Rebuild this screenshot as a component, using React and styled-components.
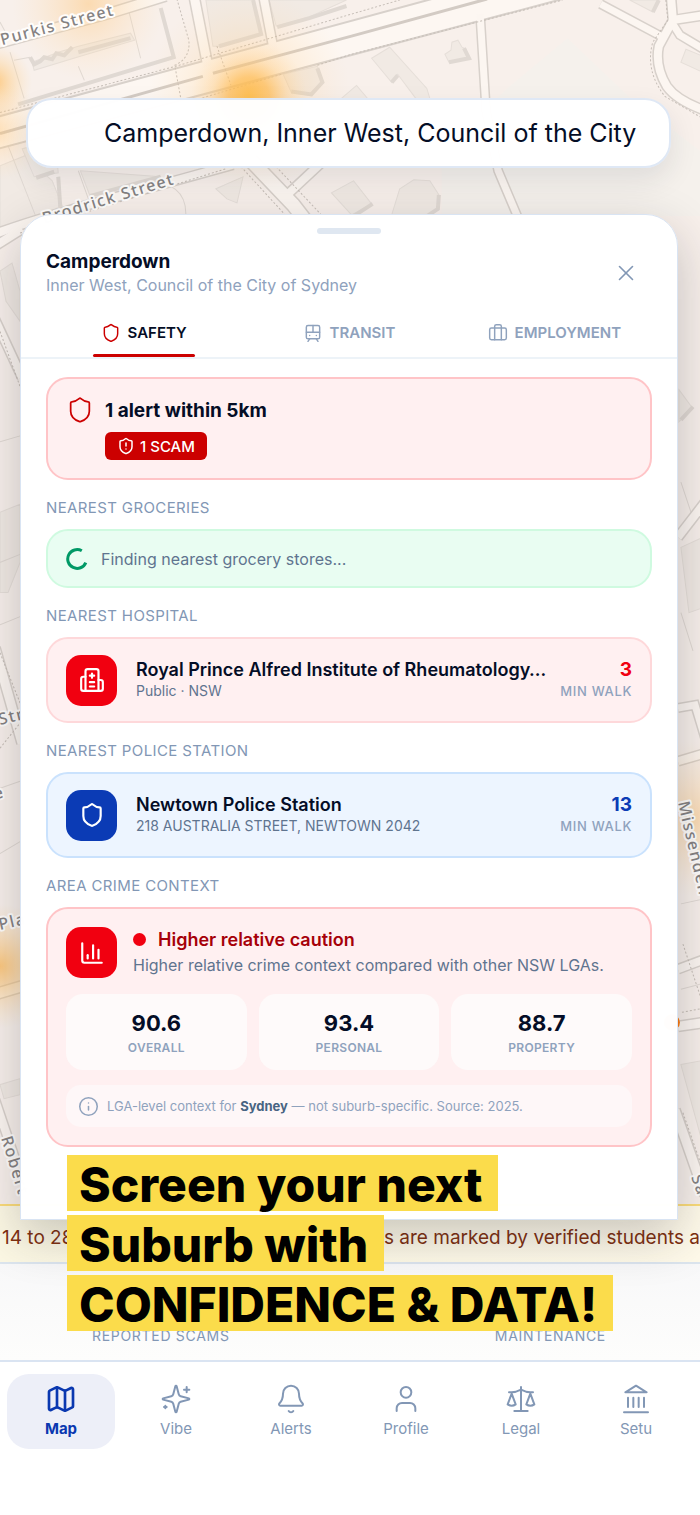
import React, { useState } from 'react';
import styled, { createGlobalStyle, css } from 'styled-components';
import { Bell, Briefcase, ChartColumn, Info, Map, Shield, ShieldAlert, TramFront, User, X } from 'lucide-react';

const GlobalStyle = createGlobalStyle`
  *, *::before, *::after {
    box-sizing: border-box;
  }

  body {
    margin: 0;
    background: #ffffff;
    font-family: Inter, 'Liberation Sans', sans-serif;
    color: #040d26;
  }

  button, input {
    font: inherit;
    color: inherit;
  }

  h1, h2, h3, p, dl, dd {
    margin: 0;
  }
`;

const Page = styled.div`
  position: relative;
  display: flex;
  flex-direction: column;
  min-height: 100vh;
  overflow: hidden;
`;

const MapCanvas = styled.svg`
  position: absolute;
  top: 0;
  left: 0;
  width: 100%;
  height: 1240px;
  background: #f6efea;
`;

const SearchBar = styled.label`
  position: relative;
  display: flex;
  align-items: center;
  height: 70px;
  margin: 98px 29px 46px 26px;
  padding: 0 24px 0 76px;
  background: rgba(255, 255, 255, 0.98);
  border: 2px solid #dfe8f5;
  border-radius: 26px;
  box-shadow: 0 12px 28px rgba(30, 40, 60, 0.1);
`;

const SearchInput = styled.input`
  width: 100%;
  padding: 0;
  border: 0;
  outline: 0;
  background: transparent;
  font-size: 25px;
`;

const Sheet = styled.main`
  position: relative;
  z-index: 1;
  margin: 0 22px 0 20px;
  padding-bottom: 72px;
  background: rgba(255, 255, 255, 0.99);
  border: 1px solid #d9e4f3;
  border-radius: 32px 32px 0 0;
  box-shadow: 0 16px 50px rgba(30, 30, 40, 0.24);
`;

const Handle = styled.div`
  width: 64px;
  height: 6px;
  margin: 13px auto 0;
  border-radius: 3px;
  background: #dfe7f1;
`;

const SheetHeader = styled.header`
  display: flex;
  justify-content: space-between;
  align-items: center;
  padding: 16px 38px 0 25px;
`;

const SuburbName = styled.h1`
  font-size: 19px;
  line-height: 24px;
  font-weight: 700;
`;

const SuburbArea = styled.p`
  font-size: 16px;
  line-height: 22px;
  color: #8fa2bd;
`;

const CloseButton = styled.button`
  display: flex;
  padding: 0;
  border: 0;
  background: none;
  color: #8297b5;
  cursor: pointer;
`;

const Tabs = styled.div`
  display: grid;
  grid-template-columns: repeat(3, 1fr);
  justify-items: center;
  padding: 15px 20px 0;
  border-bottom: 2px solid #edf3f8;
`;

const Tab = styled.button`
  position: relative;
  display: flex;
  align-items: center;
  gap: 7px;
  height: 46px;
  padding: 0 8px 3px;
  border: 0;
  background: none;
  color: ${({ $active }) => ($active ? '#040d26' : '#8fa2bd')};
  font-size: 15px;
  font-weight: 600;
  cursor: pointer;

  svg {
    color: ${({ $active }) => ($active ? '#cc0000' : '#8fa2bd')};
  }

  &::after {
    content: '';
    position: absolute;
    right: 0;
    bottom: 0;
    left: 0;
    height: 3px;
    border-radius: 2px;
    background: ${({ $active }) => ($active ? '#cc0000' : 'transparent')};
  }
`;

const Content = styled.div`
  padding: 18px 25px 0;
`;

const tones = {
  alert: { background: '#fff0f1', border: '#ffc4c7', strong: '#f10010' },
  red: { background: '#fff0f1', border: '#fed8da', strong: '#f10010' },
  green: { background: '#e9fdf2', border: '#cffae0', strong: '#009966' },
  blue: { background: '#edf5ff', border: '#cae2fd', strong: '#0b3bb5' },
};

const Card = styled.div`
  border: 2px solid ${({ $tone }) => tones[$tone].border};
  border-radius: 22px;
  background: ${({ $tone }) => tones[$tone].background};
`;

const AlertCard = styled(Card)`
  display: flex;
  gap: 11px;
  padding: 17px 18px 18px;

  > svg {
    color: #cc0000;
  }
`;

const AlertTitle = styled.h2`
  padding: 3px 0 9px;
  font-size: 19px;
  line-height: 24px;
  font-weight: 700;
`;

const ScamBadge = styled.span`
  display: inline-flex;
  align-items: center;
  gap: 5px;
  height: 28px;
  padding: 0 12px;
  border-radius: 6px;
  background: #cc0000;
  color: #ffffff;
  font-size: 15px;
  font-weight: 500;
`;

const SectionLabel = styled.h2`
  padding: 18px 0 11px;
  font-size: 15px;
  line-height: 20px;
  font-weight: 400;
  letter-spacing: 0.025em;
  text-transform: uppercase;
  color: #8297b5;
`;

const LoadingCard = styled(Card)`
  display: flex;
  align-items: center;
  gap: 13px;
  height: 59px;
  padding: 0 18px;
  font-size: 16px;
  color: #5f748f;
`;

const PlaceCard = styled(Card)`
  display: flex;
  align-items: center;
  min-height: 86px;
  padding: 15px 18px;
`;

const IconTile = styled.div`
  display: flex;
  flex: none;
  align-items: center;
  justify-content: center;
  width: 51px;
  height: 51px;
  border-radius: 15px;
  background: ${({ $tone }) => tones[$tone].strong};
  color: #ffffff;
`;

const PlaceText = styled.div`
  flex: 1;
  min-width: 0;
  padding: 0 11px 0 19px;
`;

const PlaceName = styled.h3`
  overflow: hidden;
  font-size: 18px;
  line-height: 22px;
  font-weight: 600;
  white-space: nowrap;
  text-overflow: ellipsis;
`;

const PlaceDetail = styled.p`
  font-size: 14px;
  line-height: 20px;
  color: #5f748f;
`;

const Distance = styled.div`
  text-align: right;
`;

const Minutes = styled.div`
  font-size: 19px;
  line-height: 22px;
  font-weight: 700;
  color: ${({ $tone }) => tones[$tone].strong};
`;

const MinutesUnit = styled.div`
  font-size: 13px;
  line-height: 20px;
  font-weight: 500;
  letter-spacing: 0.05em;
  color: #8fa2bd;
`;

const CrimeCard = styled(Card)`
  padding: 18px;
`;

const CrimeHead = styled.div`
  display: flex;
  align-items: center;
  gap: 16px;
`;

const CrimeTitle = styled.h3`
  display: flex;
  align-items: center;
  gap: 12px;
  font-size: 18px;
  line-height: 25px;
  font-weight: 600;
  color: #a60009;

  &::before {
    content: '';
    width: 13px;
    height: 13px;
    border-radius: 50%;
    background: #f10010;
  }
`;

const CrimeText = styled.p`
  font-size: 16px;
  line-height: 26px;
  color: #5f748f;
`;

const Scores = styled.dl`
  display: grid;
  grid-template-columns: repeat(3, 1fr);
  gap: 12px;
  padding: 16px 0 15px;
`;

const Score = styled.div`
  display: flex;
  flex-direction: column-reverse;
  align-items: center;
  justify-content: center;
  height: 76px;
  padding-top: 3px;
  border-radius: 17px;
  background: #fefafa;

  dd {
    font-size: 22px;
    line-height: 28px;
    font-weight: 700;
  }

  dt {
    font-size: 12px;
    line-height: 22px;
    font-weight: 600;
    letter-spacing: 0.025em;
    color: #8fa2bd;
  }
`;

const SourceNote = styled.p`
  display: flex;
  align-items: center;
  gap: 8px;
  min-height: 42px;
  padding: 0 12px;
  border-radius: 15px;
  background: #fef7f8;
  font-size: 13px;
  line-height: 18px;
  color: #8fa2bd;

  strong {
    color: #486482;
  }

  svg {
    flex: none;
  }
`;

const Footer = styled.footer`
  position: relative;
  display: flex;
  flex: 1;
  flex-direction: column;
  margin-top: -16px;
`;

const Ticker = styled.div`
  display: flex;
  align-items: center;
  justify-content: space-between;
  height: 60px;
  padding: 6px 0 0 2px;
  overflow: hidden;
  border-top: 2px solid #fbdc7a;
  border-bottom: 2px solid #dce5ee;
  background: linear-gradient(90deg, #fcf8e4, #fffaea);
  font-size: 19px;
  color: #7f3010;
  white-space: nowrap;
`;

const Totals = styled.div`
  display: flex;
  align-items: flex-end;
  justify-content: space-between;
  height: 96px;
  padding: 0 94px 14px 92px;
  background: linear-gradient(#f8f8f9, #fdfdfc);
  color: #8297b5;
  font-size: 14px;
  line-height: 20px;
  letter-spacing: 0.05em;
`;

const Headline = styled.div`
  position: absolute;
  z-index: 2;
  top: -49px;
  left: 67px;
  display: flex;
  flex-direction: column;
  align-items: flex-start;
  gap: 4px;
`;

const HeadlineLine = styled.span`
  height: 56px;
  padding: 0 16px 0 12px;
  background: #fbdc4b;
  color: #000000;
  font-size: 48px;
  line-height: 60px;
  font-weight: 800;
  white-space: nowrap;
`;

const BottomNav = styled.nav`
  display: grid;
  flex: 1;
  grid-template-columns: repeat(6, 1fr);
  align-items: start;
  gap: 7px;
  min-height: 155px;
  padding: 12px 10px 0 7px;
  border-top: 2px solid #dae4f2;
  background: #ffffff;
`;

const NavItem = styled.a`
  display: flex;
  flex-direction: column;
  align-items: center;
  gap: 4px;
  height: 75px;
  padding-top: 9px;
  border-radius: 22px;
  color: #8297b5;
  font-size: 15px;
  line-height: 20px;
  text-decoration: none;

  ${({ $active }) =>
    $active &&
    css`
      background: #edeff8;
      color: #0a38b0;
      font-weight: 700;
    `}
`;

const Outline = ({ size, strokeWidth, children }) => (
  <svg
    width={size}
    height={size}
    viewBox="0 0 24 24"
    fill="none"
    stroke="currentColor"
    strokeWidth={strokeWidth}
    strokeLinecap="round"
    strokeLinejoin="round"
    aria-hidden="true"
  >
    {children}
  </svg>
);

const HospitalIcon = (props) => (
  <Outline {...props}>
    <path d="M12 6v4M14 8h-4M14 14h-4M14 18h-4" />
    <path d="M18 12h2a2 2 0 0 1 2 2v6a2 2 0 0 1-2 2H4a2 2 0 0 1-2-2v-9a2 2 0 0 1 2-2h2" />
    <path d="M18 22V4a2 2 0 0 0-2-2H8a2 2 0 0 0-2 2v18" />
  </Outline>
);

const SparklesIcon = (props) => (
  <Outline {...props}>
    <path d="M9.937 15.5A2 2 0 0 0 8.5 14.063l-6.135-1.582a.5.5 0 0 1 0-.962L8.5 9.936A2 2 0 0 0 9.937 8.5l1.582-6.135a.5.5 0 0 1 .963 0L14.063 8.5A2 2 0 0 0 15.5 9.937l6.135 1.581a.5.5 0 0 1 0 .964L15.5 14.063a2 2 0 0 0-1.437 1.437l-1.582 6.135a.5.5 0 0 1-.963 0z" />
    <path d="M20 3v4M22 5h-4M4 17v2M5 18H3" />
  </Outline>
);

const ScaleIcon = (props) => (
  <Outline {...props}>
    <path d="m16 16 3-8 3 8c-.87.65-1.92 1-3 1s-2.13-.35-3-1ZM2 16l3-8 3 8c-.87.65-1.92 1-3 1s-2.13-.35-3-1Z" />
    <path d="M7 21h10M12 3v18M3 7h2c2 0 5-1 7-2 2 1 5 2 7 2h2" />
  </Outline>
);

const LandmarkIcon = (props) => (
  <Outline {...props}>
    <path d="M3 22h18M6 18v-7M10 18v-7M14 18v-7M18 18v-7M12 2l8 5H4z" />
  </Outline>
);

const SpinnerIcon = () => (
  <svg width="22" height="22" viewBox="0 0 22 22" fill="none" stroke="#009966" strokeWidth="3" aria-hidden="true">
    <path d="M15.8 2.8A9.4 9.4 0 1 0 19.8 14.6" />
  </svg>
);

const roads = [
  { d: 'M-5 233 C40 216 110 198 232 164', width: 8 },
  { d: 'M-5 44 L110 13 L165 -4', width: 9 },
  { d: 'M193 -5 L207 66', width: 9 },
  { d: 'M262 -5 L273 52', width: 8 },
  { d: 'M478 14 L484 110 L496 170 L518 222', width: 7 },
  { d: 'M598 4 L658 36', width: 7 },
  { d: 'M668 -5 L670 20 L656 46 Q652 66 664 86 Q674 100 702 110', width: 8 },
  { d: 'M670 20 L702 15', width: 8 },
  { d: 'M670 24 L677 35 L702 50', width: 7 },
  { d: 'M250 160 L292 204 L306 222', width: 13 },
  { d: 'M288 192 L320 162', width: 8 },
  { d: 'M-5 318 L22 376', width: 8 },
  { d: 'M-5 245 L22 228', width: 8 },
  { d: 'M-5 645 L22 740', width: 9 },
  { d: 'M675 535 L702 500', width: 8 },
  { d: 'M675 705 L692 702 L702 735', width: 7 },
  { d: 'M675 758 L702 750', width: 8 },
  { d: 'M675 1022 L702 1018', width: 9 },
  { d: 'M672 1105 L702 1190', width: 9 },
  { d: 'M-5 1095 L22 1175', width: 8 },
  { d: 'M-5 990 L22 982', width: 10 },
  { d: 'M675 965 L702 955', width: 8 },
];

const buildings = [
  'M32 62 L58 52 L78 46 L130 33 L134 40 L80 56 L34 70z',
  'M212 46 L205 0 L252 0 L260 35 L218 46z',
  'M275 26 L268 0 L345 0 L308 17z',
  'M370 58 L388 47 L425 88 L428 98 L414 98 L396 74 L390 82z',
  'M443 54 L449 50 L450 42 L456 40 L460 47 L464 49 L466 58 L447 62z',
  'M282 74 L316 66 L322 82 L310 95 L290 92z',
  'M340 98 L355 85 L366 98z',
  'M352 180 L370 203 L350 214 L330 192z',
  'M398 188 L412 179 L428 180 L437 194 L436 208 L422 216 L390 214z',
  'M80 170 L160 176 L90 196z',
  'M627 0 L650 12 L655 0z',
  'M683 49 L700 56 L700 72 L678 62z',
  'M0 165 L25 155 L52 180 L62 205 L20 222 L0 226z',
  'M22 148 L55 140 L58 172 L34 176z',
  'M215 188 L242 176 L236 202 L226 198z',
  'M0 270 L12 262 L20 290 L20 320 L6 300z',
  'M0 510 L20 502 L20 560 L8 590 L0 590z',
  'M678 545 L700 535 L700 605 L686 610z',
  'M678 1060 L700 1056 L700 1140z',
  'M0 1080 L20 1074 L20 1090 L4 1094z',
  'M676 388 L690 407 L676 420z',
];

const heatSpots = [
  { x: 248, y: 97, r: 58, fill: 'url(#heatStrong)' },
  { x: 248, y: 90, r: 100, fill: 'url(#heatSoft)' },
  { x: -6, y: 82, r: 38, fill: 'url(#heat)' },
  { x: 88, y: 4, r: 76, fill: 'url(#heatSoft)' },
  { x: -4, y: 130, r: 50, fill: 'url(#heatSoft)' },
  { x: 0, y: 962, r: 62, fill: 'url(#heat)' },
  { x: 690, y: 815, r: 78, fill: 'url(#heatSoft)' },
];

const mapLabels = [
  { text: 'Purkis Street', x: 2, y: 45, angle: -15 },
  { text: 'Brodrick Street', x: 44, y: 223, angle: -17 },
  { text: 'Str', x: 0, y: 722, angle: -14 },
  { text: 'e', x: -5, y: 796, angle: -14 },
  { text: 'Pla', x: 0, y: 926, angle: -13 },
  { text: 'Robert', x: 1, y: 1133, angle: 73 },
  { text: 'Missenden', x: 675, y: 799, angle: 77 },
  { text: 'Sa', x: 688, y: 1172, angle: 70 },
];

const StreetMap = () => (
  <MapCanvas viewBox="0 0 697 1240" preserveAspectRatio="xMinYMin slice" aria-hidden="true">
    <defs>
      <radialGradient id="heatStrong">
        <stop offset="0" stopColor="#ffba2e" stopOpacity="0.9" />
        <stop offset="0.35" stopColor="#ffb63c" stopOpacity="0.65" />
        <stop offset="0.65" stopColor="#ffc873" stopOpacity="0.25" />
        <stop offset="1" stopColor="#ffdca8" stopOpacity="0" />
      </radialGradient>
      <radialGradient id="heat">
        <stop offset="0" stopColor="#ffb74f" stopOpacity="0.7" />
        <stop offset="1" stopColor="#ffd9a0" stopOpacity="0" />
      </radialGradient>
      <radialGradient id="heatSoft">
        <stop offset="0" stopColor="#ffc06a" stopOpacity="0.45" />
        <stop offset="1" stopColor="#ffdcae" stopOpacity="0" />
      </radialGradient>
    </defs>
    <rect width="697" height="1240" fill="#f8f0eb" />
    <path d="M505 88 L565 38 L625 95 L697 150 V215 H440 V150z" fill="#f5f1ec" />
    <g fill="#f1eae4" stroke="#e6dfd9">
      {buildings.map((d) => (
        <path key={d} d={d} />
      ))}
    </g>
    <g fill="none" stroke="#e0d9d3" strokeWidth="4">
      <path d="M160 8 L173 57 L18 104 M78 52 L130 38 M218 46 L260 34 L252 0 M276 27 L308 18 L345 6 M316 68 L321 82 L310 94 L290 91 M390 82 L396 75 M447 62 L467 58 L462 48 M371 203 L351 216 M437 194 L436 208 L424 216 M58 176 L60 206 M36 177 L54 171 M90 195 L160 176 M30 57 L34 64 L40 61 L44 57 L52 59 L56 53 L64 55 L72 47 M650 12 L656 0 M690 405 L678 418" />
    </g>
    <g fill="none" stroke="#e0d9d3">
      <path d="M10 52 L24 98 M78 66 L84 80 M128 10 L140 58 M14 60 L30 57 M0 22 L12 44 M8 145 L35 214 M78 170 L88 198 M142 180 Q186 180 185 214 M0 440 L20 434 M0 622 L20 614 M0 560 L20 552 M0 785 L20 778 M0 850 L20 838 M678 480 L688 510 M678 610 L690 648 M678 900 L697 896 M678 985 L697 980" />
    </g>
    {roads.map(({ d, width }) => (
      <path key={d} d={d} fill="none" stroke="#d8d1cb" strokeWidth={width + 3} />
    ))}
    <path d="M-5 117 L430 -1 H560 L-5 149z" fill="#fdf7f2" stroke="#d8d1cb" strokeWidth="2" />
    {roads.map(({ d, width }) => (
      <path key={d} d={d} fill="none" stroke="#fcf6f1" strokeWidth={width} />
    ))}
    <path d="M0 133 L202 76 M212 73 L350 36 L485 -1" fill="none" stroke="#d3cbc4" strokeWidth="3" />
    <g fill="none" stroke="#c6beb7" strokeDasharray="2 2">
      <path d="M0 112 L175 66 L350 14 L398 0 M175 -5 L188 40 Q190 58 174 65 L180 98 M216 46 L230 85 M280 74 L200 98 M316 65 L350 54 L560 0 M663 0 L665 20 L650 42 Q642 70 662 96 L700 118 M240 166 L284 214 M275 166 L320 214 M20 232 L225 168 M0 330 L20 385 M0 650 L20 700 M0 745 L20 720 M680 800 L700 880 M680 940 L700 1000 M679 1008 L700 1004 M680 1108 L700 1165" />
    </g>
    {heatSpots.map(({ x, y, r, fill }) => (
      <circle key={`${x}-${y}`} cx={x} cy={y} r={r} fill={fill} />
    ))}
    <circle cx="669" cy="1018" r="8" fill="#ff7a0d" />
    <g
      fontFamily="'Noto Sans', sans-serif"
      fontSize="16"
      fontWeight="500"
      letterSpacing="1.5"
      fill="#858282"
      stroke="#fffdfb"
      strokeWidth="4"
      strokeLinejoin="round"
      paintOrder="stroke"
    >
      {mapLabels.map(({ text, x, y, angle }) => (
        <text key={text} transform={`translate(${x} ${y}) rotate(${angle})`}>
          {text}
        </text>
      ))}
    </g>
  </MapCanvas>
);

const tabs = [
  { id: 'safety', label: 'SAFETY', Icon: Shield },
  { id: 'transit', label: 'TRANSIT', Icon: TramFront },
  { id: 'employment', label: 'EMPLOYMENT', Icon: Briefcase },
];

const scores = [
  { label: 'OVERALL', value: '90.6' },
  { label: 'PERSONAL', value: '93.4' },
  { label: 'PROPERTY', value: '88.7' },
];

const navItems = [
  { label: 'Map', Icon: Map },
  { label: 'Vibe', Icon: SparklesIcon },
  { label: 'Alerts', Icon: Bell },
  { label: 'Profile', Icon: User },
  { label: 'Legal', Icon: ScaleIcon },
  { label: 'Setu', Icon: LandmarkIcon },
];

const Place = ({ tone, icon, name, detail, minutes }) => (
  <PlaceCard $tone={tone}>
    <IconTile $tone={tone}>{icon}</IconTile>
    <PlaceText>
      <PlaceName>{name}</PlaceName>
      <PlaceDetail>{detail}</PlaceDetail>
    </PlaceText>
    <Distance>
      <Minutes $tone={tone}>{minutes}</Minutes>
      <MinutesUnit>MIN WALK</MinutesUnit>
    </Distance>
  </PlaceCard>
);

const App = () => {
  const [query, setQuery] = useState('Camperdown, Inner West, Council of the City');
  const [activeTab, setActiveTab] = useState('safety');

  return (
    <Page>
      <GlobalStyle />
      <StreetMap />
      <SearchBar>
        <SearchInput aria-label="Search suburb" value={query} onChange={(e) => setQuery(e.target.value)} />
      </SearchBar>

      <Sheet>
        <Handle />
        <SheetHeader>
          <div>
            <SuburbName>Camperdown</SuburbName>
            <SuburbArea>Inner West, Council of the City of Sydney</SuburbArea>
          </div>
          <CloseButton type="button" aria-label="Close">
            <X size={26} strokeWidth={1.5} />
          </CloseButton>
        </SheetHeader>

        <Tabs role="tablist">
          {tabs.map(({ id, label, Icon }) => (
            <Tab
              key={id}
              type="button"
              role="tab"
              aria-selected={activeTab === id}
              $active={activeTab === id}
              onClick={() => setActiveTab(id)}
            >
              <Icon size={20} strokeWidth={1.75} />
              {label}
            </Tab>
          ))}
        </Tabs>

        <Content>
          <AlertCard $tone="alert">
            <Shield size={28} strokeWidth={1.5} />
            <div>
              <AlertTitle>1 alert within 5km</AlertTitle>
              <ScamBadge>
                <ShieldAlert size={18} strokeWidth={2} />1 SCAM
              </ScamBadge>
            </div>
          </AlertCard>

          <SectionLabel>Nearest groceries</SectionLabel>
          <LoadingCard $tone="green">
            <SpinnerIcon />
            Finding nearest grocery stores...
          </LoadingCard>

          <SectionLabel>Nearest hospital</SectionLabel>
          <Place
            tone="red"
            icon={<HospitalIcon size={26} strokeWidth={2} />}
            name="Royal Prince Alfred Institute of Rheumatology…"
            detail="Public · NSW"
            minutes={3}
          />

          <SectionLabel>Nearest police station</SectionLabel>
          <Place
            tone="blue"
            icon={<Shield size={26} strokeWidth={2} />}
            name="Newtown Police Station"
            detail="218 AUSTRALIA STREET, NEWTOWN 2042"
            minutes={13}
          />

          <SectionLabel>Area crime context</SectionLabel>
          <CrimeCard $tone="alert">
            <CrimeHead>
              <IconTile $tone="alert">
                <ChartColumn size={26} strokeWidth={2} />
              </IconTile>
              <div>
                <CrimeTitle>Higher relative caution</CrimeTitle>
                <CrimeText>Higher relative crime context compared with other NSW LGAs.</CrimeText>
              </div>
            </CrimeHead>
            <Scores>
              {scores.map(({ label, value }) => (
                <Score key={label}>
                  <dt>{label}</dt>
                  <dd>{value}</dd>
                </Score>
              ))}
            </Scores>
            <SourceNote>
              <Info size={21} strokeWidth={1.75} />
              <span>
                LGA-level context for <strong>Sydney</strong> — not suburb-specific. Source: 2025.
              </span>
            </SourceNote>
          </CrimeCard>
        </Content>
      </Sheet>

      <Footer>
        <Ticker>
          <span>14 to 28</span>
          <span>s are marked by verified students a</span>
        </Ticker>
        <Totals>
          <span>REPORTED SCAMS</span>
          <span>MAINTENANCE</span>
        </Totals>
        <BottomNav>
          {navItems.map(({ label, Icon }, index) => (
            <NavItem key={label} href={`#${label.toLowerCase()}`} $active={index === 0}>
              <Icon size={32} strokeWidth={index === 0 ? 2 : 1.5} />
              {label}
            </NavItem>
          ))}
        </BottomNav>
        <Headline>
          <HeadlineLine>Screen your next</HeadlineLine>
          <HeadlineLine>Suburb with</HeadlineLine>
          <HeadlineLine>CONFIDENCE & DATA!</HeadlineLine>
        </Headline>
      </Footer>
    </Page>
  );
};

export default App;
